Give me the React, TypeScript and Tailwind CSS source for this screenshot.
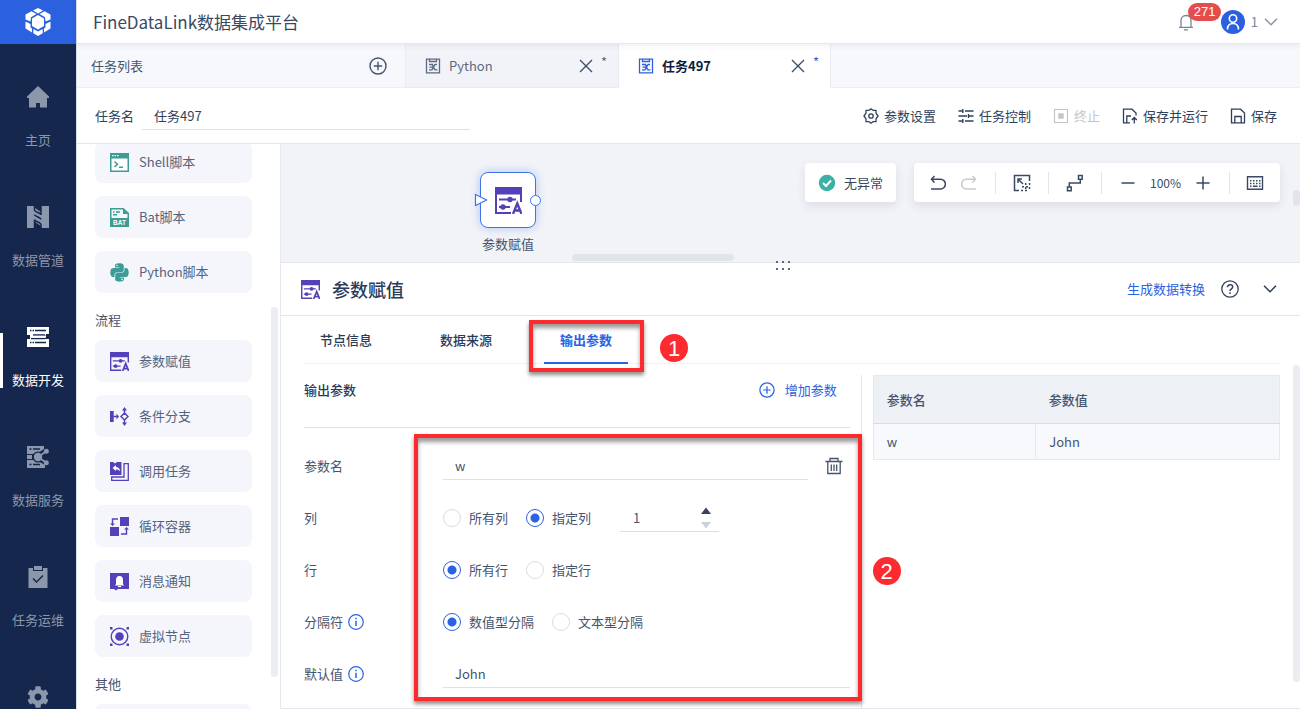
import { useState } from "react"
import type { ReactNode } from "react"
import { FaCog, FaPython } from "react-icons/fa"
import clsx from "clsx"

type IconProps = { className?: string }

/* ---------- icons ---------- */

function Logo() {
  return (
    <svg viewBox="0 0 26 28" className="h-7 w-[26px]" fill="#fff" aria-hidden="true">
      <path d="M13 0 18 2.500 13 5.500 8 2.500Z" />
      <path d="M6.500 3.200 11.500 6 6 9.300 5.500 13.500.500 11.500V6.500Z" />
      <path d="M19.500 3.200 14.500 6 20 9.300 20.500 13.500 25.500 11.500V6.500Z" />
      <path d="M.5 13.500 5.500 16V19.500L7 20.500V24.500L.5 20.500Z" />
      <path d="M25.500 13.500 20.500 16V19.500L19 20.500V24.500L25.500 20.500Z" />
      <path d="M8.300 21 13 23.500 17.700 21V25.300L13 28 8.300 25.300Z" />
      <path d="M13 7 19 10.500V18L13 21.500 7 18V10.500Z" />
    </svg>
  )
}

function HomeIcon() {
  return (
    <svg viewBox="0 0 22 22" className="size-[22px]" fill="currentColor" aria-hidden="true">
      <path d="M11 0 22 10.500V12h-2v9.500h-7V17H9v4.500H2V12H0v-1.500Z" />
    </svg>
  )
}

function PipeIcon() {
  return (
    <svg viewBox="0 0 22 22" className="size-[22px]" aria-hidden="true">
      <path fill="currentColor" d="M0 0h8v2l6 4V0h8v22h-8v-2l-6-4v6H0Z" />
      <path fill="none" stroke="#15274c" strokeWidth="1.500" d="M7.500 0v4c0 2 6.500 3 6.500 5V0M7.500 8.500c0 2 6.500 3 6.500 5M7.500 22v-8.500c0 2 6.500 3 6.500 5V22" />
    </svg>
  )
}

function DevIcon() {
  return (
    <svg viewBox="0 0 22 20" className="h-5 w-[22px]" aria-hidden="true">
      <path fill="currentColor" d="M0 0h22v7h-3v1.500h-1V12h4v8H0v-8h3v-4H0Z" />
      <path stroke="#15274c" strokeWidth="1.500" fill="none" d="M8 3.500h11M3 3.500h1.500M5.500 3.500H7M8 15.500h11M3 15.500h1.500M5.500 15.500H7M4 11.500h14M6 8h12" />
      <path stroke="currentColor" d="M4 9.750h15" strokeWidth="2" />
    </svg>
  )
}

function ServiceIcon() {
  return (
    <svg viewBox="0 0 22 22" className="size-[22px]" aria-hidden="true">
      <path fill="currentColor" d="M0 0h17v3l-6 4-4 1H0ZM0 9h5v4H0ZM0 14h7l4 1 7 4v3H0Z" />
      <path stroke="#15274c" strokeWidth="1.500" fill="none" d="M2.500 3h2M6 3h7M2.500 18.500h2M6 18.500h7" />
      <path stroke="#15274c" strokeWidth="4" fill="none" d="M19 5.500 11 11l8 5.500" />
      <circle cx="11" cy="11" r="5.500" fill="#15274c" />
      <circle cx="11" cy="11" r="4.200" fill="currentColor" />
      <path stroke="currentColor" strokeWidth="1.800" fill="none" d="M19 5.500 11 11l8 5.500" />
      <circle cx="19.300" cy="5.200" r="2.500" fill="currentColor" />
      <circle cx="19.300" cy="16.800" r="2.500" fill="currentColor" />
    </svg>
  )
}

function OpsIcon() {
  return (
    <svg viewBox="0 0 20 22" className="h-[22px] w-5" aria-hidden="true">
      <path fill="currentColor" d="M.5 2H5v3h10V2h4.500v20H.5Z" />
      <path fill="currentColor" d="M6 0h8v4H6Z" />
      <path stroke="#15274c" strokeWidth="1.500" fill="none" d="m5 12.500 3.500 3.500L15 9.500" />
    </svg>
  )
}

function ShellIcon() {
  return (
    <svg viewBox="0 0 19 19" className="size-[19px]" aria-hidden="true">
      <path fill="#3b9d95" d="M0 0h19v19H0Z" />
      <path fill="#fff" d="M1.500 5.500h16v12h-16Z" />
      <path stroke="#fff" strokeWidth="1.200" d="M2 2.700h1.500M4.500 2.700H6M7 2.700h1.500" />
      <path stroke="#3b9d95" strokeWidth="1.500" fill="none" d="m4.500 8.500 3 2.700-3 2.700M9 14.300h4" />
    </svg>
  )
}

function BatIcon() {
  return (
    <svg viewBox="0 0 19 19" className="size-[19px]" aria-hidden="true">
      <path fill="#f5f6fb" stroke="#3b9d95" strokeWidth="1.500" d="M.75.75h12.500l5 4.500v13H.75Z" />
      <path fill="#3b9d95" d="M0 10h19v9H0ZM13 0l6 6h-6Z" />
      <path stroke="#3b9d95" strokeWidth="1.500" d="M6 4h4M3 6.800h4M3 4h1.500" />
      <text x="9.500" y="17" fontSize="6.500" fontWeight="700" fontFamily="Liberation Sans, sans-serif" textAnchor="middle" fill="#fff">BAT</text>
    </svg>
  )
}

function AssignIcon({ className = "size-[19px]" }: IconProps) {
  return (
    <svg viewBox="0 0 27 27" className={className} aria-hidden="true">
      <path fill="#5441b9" d="M0 0h27v15h-2V7.500H2V25h14v2H0Z" />
      <path stroke="#5441b9" strokeWidth="1.800" d="M4 12.500h17M4 20h11" />
      <circle cx="15" cy="12.500" r="2.700" fill="#5441b9" />
      <circle cx="8" cy="20" r="2.700" fill="#5441b9" />
      <path fill="none" stroke="#5441b9" strokeWidth="2.400" d="m18 27 4.300-10.500L26.500 27M19.500 23.500h6" />
    </svg>
  )
}

function BranchIcon() {
  return (
    <svg viewBox="0 0 19 19" className="size-[19px]" aria-hidden="true">
      <path fill="#5441b9" d="M0 4h3.700v11H0ZM14.500 0 17 3.500h-5ZM14.500 19 12 15.500h5ZM6.500 6.500 9 9.500l-2.500 3Z" />
      <path fill="none" stroke="#5441b9" strokeWidth="1.500" d="M3 9.500h4M14.500 3v3M14.500 13v3M14.500 6l3.500 3.500-3.500 3.500L11 9.500Z" />
    </svg>
  )
}

function CallIcon() {
  return (
    <svg viewBox="0 0 19 19" className="size-[19px]" aria-hidden="true">
      <path fill="#5441b9" d="M0 0h3l2 1.500L7 0h4.500v13H0Z" />
      <path fill="#fff" d="M2.500 6 6 3v2c2.500 0 4 1.500 4 4.500C9 8 8 7.500 6 7.500V9Z" />
      <path fill="none" stroke="#5441b9" strokeWidth="1.300" d="M14 1.700h4.300v16.600H1.700V15H14Z" />
    </svg>
  )
}

function LoopIcon() {
  return (
    <svg viewBox="0 0 19 19" className="size-[19px]" aria-hidden="true">
      <path fill="#5441b9" d="M10 0h9v9h-9ZM0 10h9v9H0ZM0 6.500h5L2.500 9ZM14 12.500h5L16.500 10Z" />
      <path fill="none" stroke="#5441b9" strokeWidth="1.400" d="M8 2H2.500v5M11 17h5.500v-5" />
    </svg>
  )
}

function NoticeIcon() {
  return (
    <svg viewBox="0 0 19 19" className="size-[19px]" aria-hidden="true">
      <path fill="#5441b9" d="M0 1h19v16H8l-2 1.500L4 17H0Z" />
      <path fill="#fff" d="M9.500 4C6.800 4 6 6 6 8v4l-1 1.500h9L13 12V8c0-2-.8-4-3.500-4Z" />
      <path stroke="#fff" strokeWidth="1.200" d="M8 14.500h3" />
    </svg>
  )
}

function VirtualIcon() {
  return (
    <svg viewBox="0 0 19 19" className="size-[19px]" aria-hidden="true">
      <circle cx="9.500" cy="9.500" r="8.300" fill="none" stroke="#5441b9" strokeWidth="1.400" />
      <circle cx="9.500" cy="9.500" r="4.300" fill="#5441b9" />
      <path fill="#5441b9" d="M0 0h2.500v2.500H0ZM16.500 0H19v2.500h-2.500ZM0 16.500h2.500V19H0ZM16.500 16.500H19V19h-2.500Z" />
    </svg>
  )
}

function TaskIcon() {
  return (
    <svg viewBox="0 0 16 16" className="size-4" fill="none" stroke="currentColor" strokeWidth="1.300" aria-hidden="true">
      <path d="M1.500 1.200h13v13.600h-13ZM4.500 1.500v2h7v-2M4 6.500h3.500L8.500 9.200H4.500M4 11.800h3l1.500-2.600M12 6.500h-2L8.500 9.200 10 11.800h2.500" />
    </svg>
  )
}

function PlusCircle({ className = "size-[18px]" }: IconProps) {
  return (
    <svg viewBox="0 0 18 18" className={className} fill="none" stroke="currentColor" strokeWidth="1.400" aria-hidden="true">
      <circle cx="9" cy="9" r="8" />
      <path d="M9 4.800v8.400M4.800 9h8.400" />
    </svg>
  )
}

function CloseIcon() {
  return (
    <svg viewBox="0 0 14 14" className="size-3.5" fill="none" stroke="currentColor" strokeWidth="1.300" aria-hidden="true">
      <path d="m1 1 12 12M13 1 1 13" />
    </svg>
  )
}

function ParamIcon() {
  return (
    <svg viewBox="0 0 16 16" className="size-4" fill="none" stroke="currentColor" strokeWidth="1.300" strokeLinejoin="round" aria-hidden="true">
      <path d="M8 .8 10 2.300H13V5.200L15 8 13 10.800V13.700H10L8 15.200 6 13.700H3V10.800L1 8 3 5.200V2.300H6Z" />
      <circle cx="8" cy="8" r="2.200" />
    </svg>
  )
}

function ControlIcon() {
  return (
    <svg viewBox="0 0 16 16" className="size-4" fill="none" stroke="currentColor" strokeWidth="1.400" aria-hidden="true">
      <path d="M.5 3h4.500M7 3h8.500M4.800 1v4M.5 8H9M10.500 8H15.500M10.500 6v4M.5 13h4.500M7 13h8.500M4.800 11V15" />
    </svg>
  )
}

function StopIcon() {
  return (
    <svg viewBox="0 0 16 16" className="size-4" aria-hidden="true">
      <path d="M1.500 1.500h13v13h-13Z" fill="none" stroke="currentColor" strokeWidth="1.200" />
      <path d="M5.300 5.300h5.400v5.400H5.300Z" fill="currentColor" />
    </svg>
  )
}

function SaveRunIcon() {
  return (
    <svg viewBox="0 0 16 16" className="size-4" fill="none" stroke="currentColor" strokeWidth="1.300" aria-hidden="true">
      <path d="M8 14.800H1.500V1.200H10l4 3.800v2.500M4.800 14.500V8H9M12.300 15.500V9.500M9.800 12l2.500-2.500 2.500 2.500" />
    </svg>
  )
}

function SaveIcon() {
  return (
    <svg viewBox="0 0 16 16" className="size-4" fill="none" stroke="currentColor" strokeWidth="1.300" aria-hidden="true">
      <path d="M1.500 1.200h9L14.500 5v9.800h-13ZM4.800 14.500V8.500h6.400v6" />
    </svg>
  )
}

function UndoIcon({ className }: IconProps) {
  return (
    <svg viewBox="0 0 16 16" className={clsx("size-4", className)} fill="none" stroke="currentColor" strokeWidth="1.500" aria-hidden="true">
      <path d="M4.500 1 1.500 4.200l3 3.200M1.500 4.200h9a4.900 4.900 0 0 1 0 9.800H1" />
    </svg>
  )
}

function SelectAreaIcon() {
  return (
    <svg viewBox="0 0 18 18" className="size-[18px]" fill="none" stroke="currentColor" strokeWidth="1.500" aria-hidden="true">
      <path d="M6 16.500H1.500v-15h15V7M5 9V5h4M5 5l5 5" />
      <path strokeDasharray="2 2" d="M16.500 9v8M8 16.500h8M9 12.700h6M12.700 9v8" />
    </svg>
  )
}

function ConnectIcon() {
  return (
    <svg viewBox="0 0 18 18" className="size-[18px]" fill="none" stroke="currentColor" strokeWidth="1.500" aria-hidden="true">
      <path d="M1.500 13h3.700v3.700H1.500ZM12.500 1.500h3.700v3.700h-3.700ZM3.300 13V9h11V5" />
    </svg>
  )
}

function KeyboardIcon() {
  return (
    <svg viewBox="0 0 18 18" className="size-[18px]" fill="none" stroke="currentColor" strokeWidth="1.400" aria-hidden="true">
      <path d="M1.500 2.800h15v12.500h-15Z" />
      <path strokeWidth="1.600" d="M4 6.700h1.500M7 6.700h1.500M10 6.700h1.500M13 6.700h1.500M4 9.500h1.500M7 9.500h1.500M10 9.500h1.500M13 9.500h1.500M4 12.200h1.500M7 12.200h4.500M13 12.200h1.500" />
    </svg>
  )
}

function Chevron({ className }: IconProps) {
  return (
    <svg viewBox="0 0 14 8" className={clsx("h-2 w-3.5", className)} fill="none" stroke="currentColor" strokeWidth="1.500" aria-hidden="true">
      <path d="m1 .8 6 6 6-6" />
    </svg>
  )
}

function InfoIcon() {
  return (
    <svg viewBox="0 0 16 16" className="size-4 text-[#2b62e0]" fill="none" stroke="currentColor" aria-hidden="true">
      <circle cx="8" cy="8" r="7.300" strokeWidth="1.200" />
      <path strokeWidth="1.500" d="M8 6.700V12M8 3.800v1.500" />
    </svg>
  )
}

function TrashIcon() {
  return (
    <svg viewBox="0 0 18 18" className="size-[18px]" fill="none" stroke="currentColor" strokeWidth="1.300" aria-hidden="true">
      <path d="M.5 4.500h17M5 4.500v-3h8v3M2.800 4.500v12h12.400v-12M6.300 7.500V14M9 7.500V14M11.700 7.500V14" />
    </svg>
  )
}

/* ---------- data ---------- */

type NavItem = { label?: string; icon: ReactNode; active?: boolean }

const navItems: NavItem[] = [
  { label: "主页", icon: <HomeIcon /> },
  { label: "数据管道", icon: <PipeIcon /> },
  { label: "数据开发", icon: <DevIcon />, active: true },
  { label: "数据服务", icon: <ServiceIcon /> },
  { label: "任务运维", icon: <OpsIcon /> },
  { icon: <FaCog className="size-[22px]" /> },
]

type NodeItem = { label?: string; icon?: ReactNode }

const scriptNodes: NodeItem[] = [
  { label: "Shell脚本", icon: <ShellIcon /> },
  { label: "Bat脚本", icon: <BatIcon /> },
  { label: "Python脚本", icon: <FaPython className="-mx-px size-[21px] text-[#3b9d95]" /> },
]

const flowNodes: NodeItem[] = [
  { label: "参数赋值", icon: <AssignIcon /> },
  { label: "条件分支", icon: <BranchIcon /> },
  { label: "调用任务", icon: <CallIcon /> },
  { label: "循环容器", icon: <LoopIcon /> },
  { label: "消息通知", icon: <NoticeIcon /> },
  { label: "虚拟节点", icon: <VirtualIcon /> },
]

/* ---------- layout parts ---------- */

function SideNav() {
  return (
    <aside className="flex w-[76px] shrink-0 flex-col overflow-hidden bg-[#15274c]">
      <a href="#home" aria-label="FineDataLink" className="flex h-11 shrink-0 items-center justify-center bg-[#2b60de]">
        <Logo />
      </a>
      <nav className="pt-4">
        {navItems.map((item, i) => (
          <a
            key={i}
            href="#nav"
            className={clsx(
              "relative flex h-[120px] flex-col items-center gap-5 pt-6",
              item.active ? "text-white" : "text-[#8d97ab]"
            )}
          >
            {item.active && <span className="absolute left-0 top-[33px] h-[55px] w-[3px] bg-white" />}
            <span className="flex h-[26px] items-center">{item.icon}</span>
            {item.label && <span className="leading-5">{item.label}</span>}
          </a>
        ))}
      </nav>
    </aside>
  )
}

function TopBar() {
  return (
    <header className="z-10 flex h-11 shrink-0 items-center justify-between border-b border-[#e6e8ee] pl-4 pr-[22px] shadow-[0_2px_5px_rgba(30,50,90,0.07)]">
      <h1 className="text-[17px] text-[#3a4963]">FineDataLink数据集成平台</h1>
      <div className="flex items-center text-[#7b8597]">
        <button type="button" aria-label="消息" className="relative mr-[27px]">
          <svg viewBox="0 0 16 18" className="h-[18px] w-4" fill="none" stroke="currentColor" strokeWidth="1.300" aria-hidden="true">
            <path d="M1 14.300h14M3 14V7.500C3 4.500 5 2.500 8 2.500s5 2 5 5V14M6 16.800h4" />
          </svg>
          <span className="absolute -top-2.5 left-[10px] h-[18px] rounded-full bg-[#e54d4d] px-1.5 font-['Liberation_Sans',sans-serif] text-[13px] leading-[18px] text-white">
            271
          </span>
        </button>
        <button type="button" className="flex items-center">
          <span className="flex size-6 items-center justify-center rounded-full bg-[#2b60de]">
            <svg viewBox="0 0 16 18" className="h-[18px] w-4" fill="none" stroke="#fff" strokeWidth="1.600" aria-hidden="true">
              <circle cx="8" cy="5.500" r="3.700" />
              <path d="M2.500 16.500c0-4 2.200-6 5.500-6s5.500 2 5.500 6" />
            </svg>
          </span>
          <span className="mx-1.5">1</span>
          <Chevron className="text-[#8b94a5]" />
        </button>
      </div>
    </header>
  )
}

function FileTab({ label, active }: { label: string; active?: boolean }) {
  return (
    <div
      className={clsx(
        "flex w-[213px] items-center border-l border-[#e9ebf1] pl-[19px] pr-[11px]",
        active ? "border-r bg-white text-[#2b60de]" : "border-b bg-[#f2f3f8] text-[#5c6980]"
      )}
    >
      <TaskIcon />
      <span className={clsx("ml-2", active && "font-bold text-[#0e1e3c]")}>{label}</span>
      <button type="button" aria-label={`关闭${label}`} className="ml-auto mr-2 text-[#3a4963]">
        <CloseIcon />
      </button>
      <span className="pb-2">*</span>
    </div>
  )
}

function FileTabs() {
  return (
    <div className="flex h-11 shrink-0 bg-[#f7f8fc]">
      <div className="flex w-[328px] items-center justify-between border-b border-[#eceef3] pl-3.5 pr-[18px]">
        <span>任务列表</span>
        <button type="button" aria-label="新建任务">
          <PlusCircle />
        </button>
      </div>
      <FileTab label="Python" />
      <FileTab label="任务497" active />
      <div className="flex-1 border-b border-[#eceef3]" />
    </div>
  )
}

function ActionButton({ icon, label, disabled }: { icon: ReactNode; label: string; disabled?: boolean }) {
  return (
    <button type="button" disabled={disabled} className={clsx("flex items-center gap-[5px]", disabled && "text-[#c3c5ca]")}>
      {icon}
      {label}
    </button>
  )
}

function TaskBar() {
  return (
    <div className="flex h-14 shrink-0 items-center border-b border-[#e4e6ec] pl-[18px] pr-[23px] text-[#2f3f5c]">
      <label htmlFor="task-name">任务名</label>
      <input
        id="task-name"
        defaultValue="任务497"
        className="ml-2 h-7 w-[328px] border-b border-[#dfe1ea] px-3 outline-none"
      />
      <div className="ml-auto flex gap-[22px]">
        <ActionButton icon={<ParamIcon />} label="参数设置" />
        <ActionButton icon={<ControlIcon />} label="任务控制" />
        <ActionButton icon={<StopIcon />} label="终止" disabled />
        <ActionButton icon={<SaveRunIcon />} label="保存并运行" />
        <ActionButton icon={<SaveIcon />} label="保存" />
      </div>
    </div>
  )
}

function NodeGroup({ title, nodes }: { title?: string; nodes: NodeItem[] }) {
  return (
    <section>
      {title && <h2 className="mb-2.5 mt-[17px] leading-5">{title}</h2>}
      <ul className="flex flex-col gap-[13px]">
        {nodes.map((node, i) => (
          <li key={i} className="flex h-[42px] items-center gap-2.5 rounded-lg bg-[#f5f6fb] px-[15px] text-[#55637d]">
            {node.icon}
            {node.label}
          </li>
        ))}
      </ul>
    </section>
  )
}

function NodePanel() {
  return (
    <div className="relative w-[204px] shrink-0 overflow-hidden border-r border-[#e6e8ef] pl-[18px] pr-7">
      <div className="-mt-[3px]">
        <NodeGroup nodes={scriptNodes} />
        <NodeGroup title="流程" nodes={flowNodes} />
        <NodeGroup title="其他" nodes={[{}]} />
      </div>
      <span className="absolute bottom-8 right-0.5 top-[163px] w-[7px] rounded-full bg-[#ebedf3]" />
    </div>
  )
}

function Canvas() {
  const tool = "flex items-center justify-center border-l border-[#e3e5ec] h-[22px]"
  return (
    <div className="relative h-[118px] shrink-0 bg-[#f2f3f7]">
      <div className="absolute left-[199px] top-7 flex flex-col items-center gap-1.5">
        <div className="relative flex size-14 items-center justify-center rounded-lg border border-[#3f74e8] bg-white shadow-[0_0_10px_rgba(63,130,240,0.4)]">
          <AssignIcon className="size-[27px]" />
          <svg viewBox="0 0 14 14" className="absolute -left-[7px] top-5 size-3.5" fill="#fff" stroke="#3f74e8" strokeWidth="1.200" aria-hidden="true">
            <path d="M1.500 1.500 12.500 7l-11 5.500Z" />
          </svg>
          <span className="absolute -right-[6px] top-[22px] size-[11px] rounded-full border border-[#3f74e8] bg-white" />
        </div>
        <span className="leading-5">参数赋值</span>
      </div>

      <div className="absolute right-5 top-[19px] flex gap-[18px] text-[#3a4963]">
        <div className="flex h-[39px] items-center gap-2 rounded bg-white px-[13px] shadow-[0_4px_10px_rgba(30,50,90,0.10)]">
          <svg viewBox="0 0 18 18" className="size-[18px]" aria-hidden="true">
            <circle cx="9" cy="9" r="8.200" fill="#3cb0a5" />
            <path d="m5 9 3 3 5-5.500" fill="none" stroke="#fff" strokeWidth="2" />
          </svg>
          无异常
        </div>
        <div className="flex h-[39px] items-center rounded bg-white shadow-[0_4px_10px_rgba(30,50,90,0.10)]">
          <div className="flex w-[81px] items-center gap-[15px] pl-4">
            <button type="button" aria-label="撤销"><UndoIcon /></button>
            <button type="button" aria-label="重做" disabled className="text-[#c8cace]"><UndoIcon className="-scale-x-100" /></button>
          </div>
          <button type="button" aria-label="框选" className={clsx(tool, "w-[53px]")}><SelectAreaIcon /></button>
          <button type="button" aria-label="连线" className={clsx(tool, "w-[53px]")}><ConnectIcon /></button>
          <div className={clsx(tool, "w-32 gap-[15px]")}>
            <button type="button" aria-label="缩小">
              <svg viewBox="0 0 14 14" className="size-3.5" stroke="currentColor" strokeWidth="1.500" aria-hidden="true"><path d="M.5 7h13" /></svg>
            </button>
            <span className="text-xs">100%</span>
            <button type="button" aria-label="放大">
              <svg viewBox="0 0 14 14" className="size-3.5" stroke="currentColor" strokeWidth="1.500" aria-hidden="true"><path d="M.5 7h13M7 .5v13" /></svg>
            </button>
          </div>
          <button type="button" aria-label="快捷键" className={clsx(tool, "w-[51px]")}><KeyboardIcon /></button>
        </div>
      </div>

      <span className="absolute bottom-px left-[291px] h-[7px] w-[162px] rounded-full bg-[#e1e4e9]" />
      <span className="absolute right-0 top-[46px] h-4 w-[7px] rounded-full bg-[#e1e4e9]" />
      <svg viewBox="0 0 15 9" className="absolute -bottom-2 left-[495px] z-10 h-[9px] w-[15px]" fill="#5a6884" aria-hidden="true">
        <path d="M0 0h2v2H0ZM6 0h2v2H6ZM12 0h2v2h-2ZM0 7h2v2H0ZM6 7h2v2H6ZM12 7h2v2h-2Z" />
      </svg>
    </div>
  )
}

function Radio({ name, label, checked, onChange }: { name: string; label: string; checked: boolean; onChange: () => void }) {
  return (
    <label className="flex items-center gap-2">
      <input
        type="radio"
        name={name}
        checked={checked}
        onChange={onChange}
        className="size-[18px] appearance-none rounded-full border border-[#dadce4] checked:border-[#2b62e0] checked:bg-[radial-gradient(circle,#2b62e0_4px,transparent_5px)]"
      />
      {label}
    </label>
  )
}

function RadioPair({ name, options, initial }: { name: string; options: string[]; initial: number }) {
  const [value, setValue] = useState(initial)
  return (
    <div role="radiogroup" aria-label={name} className="flex gap-[18px]">
      {options.map((option, i) => (
        <Radio key={option} name={name} label={option} checked={value === i} onChange={() => setValue(i)} />
      ))}
    </div>
  )
}

function Field({ label, htmlFor, info, children }: { label: string; htmlFor?: string; info?: boolean; children: ReactNode }) {
  return (
    <div className="flex h-[52px] items-center">
      <div className="flex w-[139px] shrink-0 items-center gap-[5px]">
        {htmlFor ? <label htmlFor={htmlFor}>{label}</label> : <span>{label}</span>}
        {info && <InfoIcon />}
      </div>
      {children}
    </div>
  )
}

function Marker({ children, className }: { children: ReactNode; className: string }) {
  return (
    <span
      className={clsx(
        "absolute z-20 flex size-7 items-center justify-center rounded-full bg-[#fd2a30] font-['Liberation_Sans',sans-serif] text-[22px] font-normal text-white",
        className
      )}
    >
      {children}
    </span>
  )
}

function Frame({ className }: IconProps) {
  return (
    <span
      className={clsx(
        "pointer-events-none absolute z-20 border-4 border-[#fd2a30] shadow-[0_3px_4px_rgba(0,0,0,0.45),inset_0_4px_4px_rgba(0,0,0,0.4)]",
        className
      )}
    />
  )
}

function OutputForm() {
  return (
    <div className="border-r border-[#e4e6ec] pr-[11px]">
      <div className="flex h-[53px] items-start justify-between border-b border-[#dfe3e8] pr-[13px] pt-[5px] leading-5">
        <h3 className="font-medium text-[#2b3a57]">输出参数</h3>
        <button type="button" className="flex items-center gap-2.5 text-[#2b62e0]">
          <PlusCircle className="size-4" />
          增加参数
        </button>
      </div>
      <div className="relative mt-3">
        <Field label="参数名" htmlFor="param-name">
          <input
            id="param-name"
            defaultValue="w"
            className="h-7 min-w-0 flex-1 border-b border-[#dbe2ea] px-3 outline-none"
          />
          <button type="button" aria-label="删除" className="ml-[17px] mr-[7px]">
            <TrashIcon />
          </button>
        </Field>
        <Field label="列">
          <RadioPair name="列" options={["所有列", "指定列"]} initial={1} />
          <div className="ml-[29px] flex h-7 w-[99px] items-center border-b border-[#dcdfe6] pl-[13px] pr-2">
            <input aria-label="指定列序号" defaultValue="1" className="w-0 min-w-0 flex-1 outline-none" />
            <svg viewBox="0 0 10 22" className="h-[22px] w-2.5" aria-hidden="true">
              <path d="m5 .5 5 6.500H0Z" fill="#35435f" />
              <path d="M5 21.500 10 15H0Z" fill="#cdd0d8" />
            </svg>
          </div>
        </Field>
        <Field label="行">
          <RadioPair name="行" options={["所有行", "指定行"]} initial={0} />
        </Field>
        <Field label="分隔符" info>
          <RadioPair name="分隔符" options={["数值型分隔", "文本型分隔"]} initial={0} />
        </Field>
        <Field label="默认值" htmlFor="default-value" info>
          <input
            id="default-value"
            defaultValue="John"
            className="h-7 min-w-0 flex-1 border-b border-[#dfe1e6] px-3 outline-none"
          />
        </Field>
        <Frame className="-bottom-px -right-3 -top-1.5 left-[110px]" />
        <Marker className="-right-[51px] top-[117px]">2</Marker>
      </div>
    </div>
  )
}

function ParamTable() {
  return (
    <div className="pl-[11px]">
      <table className="w-full border-collapse border border-[#e6e9ef] text-left">
        <thead>
          <tr className="h-12 border-b border-[#d6dce3] bg-[#edf0f5]">
            <th className="w-2/5 px-[13px] font-medium">参数名</th>
            <th className="px-[13px] font-medium">参数值</th>
          </tr>
        </thead>
        <tbody>
          <tr className="h-9 bg-[#f7f9fd]">
            <td className="border-r border-[#e6e9ef] px-[13px]">w</td>
            <td className="px-[13px]">John</td>
          </tr>
        </tbody>
      </table>
    </div>
  )
}

function ConfigPanel() {
  return (
    <div className="relative flex min-h-0 flex-1 flex-col border-y border-[#e3e6ee]">
      <div className="flex h-[53px] shrink-0 items-center border-b border-[#e3e5ea] pl-5 pr-[23px]">
        <AssignIcon />
        <h2 className="ml-3 text-lg font-medium text-[#2b3a57]">参数赋值</h2>
        <a href="#transform" className="ml-auto text-[#2b62e0]">生成数据转换</a>
        <button type="button" aria-label="帮助" className="ml-4">
          <svg viewBox="0 0 18 18" className="size-[18px]" fill="none" stroke="#35435f" strokeWidth="1.300" aria-hidden="true">
            <circle cx="9" cy="9" r="8.200" />
            <path strokeWidth="1.500" d="M6.500 7.300c0-3.500 5.200-3.400 5.200-.4C11.700 8.800 9 8.900 9 11M9 12.300V14" />
          </svg>
        </button>
        <button type="button" aria-label="收起" className="ml-6 text-[#2b3a57]">
          <Chevron />
        </button>
      </div>

      <div className="flex min-h-0 flex-1 flex-col pl-[23px] pr-5">
        <div role="tablist" className="flex h-12 shrink-0 border-b border-[#f0f1f4] font-medium text-[#2b3a57]">
          <div className="-ml-[18px] flex">
            <button type="button" role="tab" className="w-[120px]">节点信息</button>
            <button type="button" role="tab" className="w-[120px]">数据来源</button>
            <div className="relative w-[120px] px-[18px]">
              <button type="button" role="tab" aria-selected="true" className="h-12 w-full border-b-2 border-[#2b62e0] pt-0.5 font-bold text-[#2b62e0]">
                输出参数
              </button>
              <Frame className="-bottom-[9px] left-[3px] right-0.5 top-1" />
              <Marker className="-right-[42px] top-[18px]">1</Marker>
            </div>
          </div>
        </div>
        <div className="grid min-h-0 flex-1 grid-cols-[4fr_3fr] pt-[11px]">
          <OutputForm />
          <ParamTable />
        </div>
      </div>
      <span className="absolute bottom-[26px] right-0 top-[102px] w-[7px] rounded-full bg-[#ebedf3]" />
    </div>
  )
}

export default function App() {
  return (
    <div className="flex h-screen overflow-hidden bg-white font-['Noto_Sans_CJK_SC',sans-serif] text-[13px] text-[#46546e]">
      <SideNav />
      <main className="flex min-w-0 flex-1 flex-col border-l border-[#d9dde6]">
        <TopBar />
        <FileTabs />
        <TaskBar />
        <div className="flex min-h-0 flex-1">
          <NodePanel />
          <div className="flex min-w-0 flex-1 flex-col">
            <Canvas />
            <ConfigPanel />
          </div>
        </div>
      </main>
    </div>
  )
}
